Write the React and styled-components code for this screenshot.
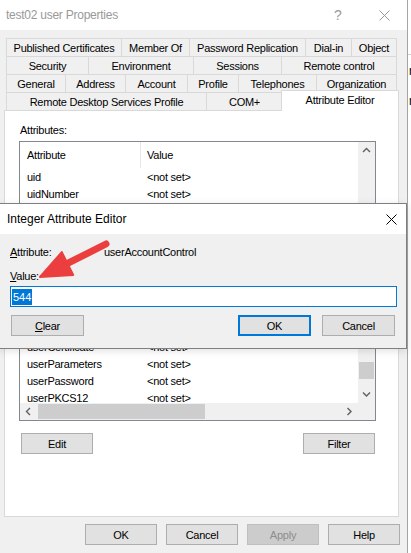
import React from "react";
import styled, { createGlobalStyle } from "styled-components";

const GlobalStyle = createGlobalStyle`
  html, body {
    margin: 0;
    padding: 0;
    background: #fff;
  }
  body {
    font-family: "Liberation Sans", Arial, sans-serif;
    font-size: 11px;
    color: #000;
  }
  * {
    box-sizing: border-box;
  }
`;

const Page = styled.div`
  position: relative;
  display: flex;
  width: 411px;
  height: 553px;
  overflow: hidden;
`;

const Window = styled.div`
  width: 408px;
  flex-shrink: 0;
  display: flex;
  flex-direction: column;
  background: #f0f0f0;
  border-right: 1px solid #a5a5a5;
`;

const TitleBar = styled.div`
  height: 30px;
  display: flex;
  align-items: center;
  background: #fff;
  padding-left: ${({ $pad }) => $pad}px;
`;

const TitleText = styled.span`
  flex: 1;
  font-size: 12px;
  letter-spacing: ${({ $tight }) => ($tight ? "-0.25px" : "0")};
  color: ${({ $muted }) => ($muted ? "#999" : "#000")};
  white-space: nowrap;
`;

const CaptionButton = styled.div`
  width: ${({ $w }) => $w}px;
  height: 30px;
  display: flex;
  align-items: center;
  justify-content: center;
  color: ${({ $color }) => $color};
  font-size: 14px;
`;

const Body = styled.div`
  display: flex;
  flex-direction: column;
  padding: 8px 0 0 4px;
`;

const TabStrip = styled.div`
  display: flex;
  flex-direction: column;
  padding-left: 2px;
`;

const TabRow = styled.div`
  display: flex;
  align-items: flex-start;
  height: 18px;
`;

const Tab = styled.div`
  width: ${({ $w }) => $w}px;
  height: 18px;
  flex-shrink: 0;
  display: flex;
  align-items: center;
  justify-content: center;
  background: #f0f0f0;
  border-top: 1px solid #d9d9d9;
  border-right: 1px solid #d9d9d9;
  white-space: nowrap;
  letter-spacing: -0.25px;

  &:first-child {
    border-left: 1px solid #d9d9d9;
  }
`;

const ActiveTab = styled(Tab)`
  position: relative;
  z-index: 1;
  height: 21px;
  margin-top: -2px;
  margin-left: -2px;
  padding-bottom: 3px;
  background: #fff;
  border-left: 1px solid #d9d9d9;
`;

const Panel = styled.div`
  width: 395px;
  height: 407px;
  display: flex;
  flex-direction: column;
  padding: 12px 0 0 14px;
  background: #fff;
  border: 1px solid #d9d9d9;
`;

const PanelLabel = styled.div`
  line-height: 14px;
  padding-left: 1px;
  letter-spacing: -0.25px;
`;

const ListBox = styled.div`
  margin-top: 4px;
  width: 357px;
  height: 280px;
  display: grid;
  grid-template-columns: 338px 17px;
  grid-template-rows: 261px 17px;
  border: 1px solid #828790;
  background: #fff;
`;

const ListContent = styled.div`
  overflow: hidden;
`;

const ListHeader = styled.div`
  display: grid;
  grid-template-columns: 121px 1fr;
  height: 26px;
`;

const HeaderCell = styled.div`
  display: flex;
  align-items: center;
  padding-left: ${({ $pad }) => $pad}px;
  border-right: ${({ $divider }) => ($divider ? "1px solid #e5e5e5" : "none")};
  letter-spacing: -0.25px;
`;

const ListRow = styled.div`
  display: grid;
  grid-template-columns: 121px 1fr;
  height: 17px;
  align-items: center;
  white-space: nowrap;
  letter-spacing: -0.25px;
`;

const Cell = styled.span`
  padding-left: ${({ $pad }) => $pad}px;
  overflow: hidden;
`;

const VScroll = styled.div`
  display: flex;
  flex-direction: column;
  background: #f0f0f0;
`;

const HScroll = styled.div`
  display: flex;
  background: #f0f0f0;
`;

const ScrollArrow = styled.div`
  width: 17px;
  height: 17px;
  flex-shrink: 0;
  display: flex;
  align-items: center;
  justify-content: center;
`;

const Track = styled.div`
  flex: 1;
  display: flex;
  flex-direction: ${({ $vertical }) => ($vertical ? "column" : "row")};
`;

const Thumb = styled.div`
  background: #cdcdcd;
  width: ${({ $vertical }) => ($vertical ? "15px" : "auto")};
  height: ${({ $vertical }) => ($vertical ? "auto" : "15px")};
  margin: ${({ $vertical }) => ($vertical ? "0 1px" : "1px 0")};
`;

const Corner = styled.div`
  background: #f0f0f0;
`;

const PanelButtons = styled.div`
  margin-top: 12px;
  margin-left: 2px;
  width: 354px;
  display: flex;
  justify-content: space-between;
`;

const Button = styled.div`
  width: ${({ $w }) => $w || 72}px;
  height: 21px;
  flex-shrink: 0;
  display: flex;
  align-items: center;
  justify-content: center;
  background: ${({ $disabled }) => ($disabled ? "#cccccc" : "#e1e1e1")};
  border: ${({ $default, $disabled }) =>
    $default
      ? "2px solid #0078d7"
      : $disabled
      ? "1px solid #bfbfbf"
      : "1px solid #adadad"};
  color: ${({ $disabled }) => ($disabled ? "#8d8d8d" : "#000")};
  letter-spacing: -0.25px;
  margin-left: ${({ $ml }) => $ml || 0}px;
`;

const Footer = styled.div`
  margin-top: 7px;
  padding-right: 7px;
  display: flex;
  justify-content: flex-end;
  gap: 9px;
`;

const Backdrop = styled.div`
  flex: 1;
  display: flex;
  flex-direction: column;
  padding-top: 54px;
  background: #fff;
  overflow: hidden;
`;

const BackdropRule = styled.div`
  border-top: 1px solid #d0d0d0;
`;

const BackdropText = styled.div`
  margin-top: ${({ $mt }) => $mt}px;
  padding-left: 1px;
  font-size: 12px;
  line-height: 14px;
  white-space: nowrap;
`;

const Dialog = styled.div`
  position: absolute;
  left: -1px;
  top: 203px;
  z-index: 2;
  width: 408px;
  height: 146px;
  display: flex;
  flex-direction: column;
  background: #f0f0f0;
  border: 1px solid #7f7f7f;
  box-shadow: 0 2px 8px rgba(0, 0, 0, 0.12);
`;

const DialogBody = styled.div`
  display: flex;
  flex-direction: column;
  padding: 11px 0 0 10px;
`;

const FieldRow = styled.div`
  display: flex;
  line-height: 14px;
  margin-top: ${({ $mt }) => $mt || 0}px;
  letter-spacing: -0.25px;
  white-space: nowrap;
`;

const FieldName = styled.span`
  width: 94px;
  flex-shrink: 0;
`;

const ValueInput = styled.div`
  margin-top: 3px;
  width: 387px;
  height: 21px;
  display: flex;
  align-items: center;
  padding-left: 1px;
  background: #fff;
  border: 1px solid #0078d7;
`;

const Selection = styled.span`
  background: #0078d7;
  color: #fff;
  line-height: 16px;
  padding: 0 1px;
`;

const DialogButtons = styled.div`
  margin-top: 8px;
  width: 387px;
  padding-right: 2px;
  display: flex;
`;

const Spacer = styled.div`
  flex: 1;
`;

const Annotation = styled.svg`
  position: absolute;
  left: 34px;
  top: 236px;
  z-index: 3;
  pointer-events: none;
`;

const tabRows = [
  [
    ["Published Certificates", 116],
    ["Member Of", 68],
    ["Password Replication", 116],
    ["Dial-in", 46],
    ["Object", 45],
  ],
  [
    ["Security", 83],
    ["Environment", 105],
    ["Sessions", 88],
    ["Remote control", 115],
  ],
  [
    ["General", 60],
    ["Address", 60],
    ["Account", 62],
    ["Profile", 51],
    ["Telephones", 78],
    ["Organization", 80],
  ],
  [
    ["Remote Desktop Services Profile", 201],
    ["COM+", 76],
  ],
];

const attributes = [
  ["uid", "<not set>"],
  ["uidNumber", "<not set>"],
  ["unicodePwd", "<not set>"],
  ["unixHomeDirectory", "<not set>"],
  ["unixUserPassword", "<not set>"],
  ["unstructuredAddress", "<not set>"],
  ["unstructuredName", "<not set>"],
  ["url", "<not set>"],
  ["userAccountControl", "0x220 = ( PASSWD_NOTREQD | NORMAL_ACCOUNT )"],
  ["userCert", "<not set>"],
  ["userCertificate", "<not set>"],
  ["userParameters", "<not set>"],
  ["userPassword", "<not set>"],
  ["userPKCS12", "<not set>"],
  ["userPrincipalName", "test02@corp.local"],
];

const CloseGlyph = ({ color }) => (
  <svg width="11" height="11" viewBox="0 0 11 11">
    <path d="M0.5 0.5 L10.5 10.5 M10.5 0.5 L0.5 10.5" stroke={color} strokeWidth="1" fill="none" />
  </svg>
);

const Chevron = ({ dir }) => {
  const paths = {
    up: "M1 5 L4.5 1.5 L8 5",
    down: "M1 1.5 L4.5 5 L8 1.5",
    left: "M5 1 L1.5 4.5 L5 8",
    right: "M1.5 1 L5 4.5 L1.5 8",
  };
  const vertical = dir === "up" || dir === "down";
  return (
    <svg width={vertical ? 9 : 7} height={vertical ? 7 : 9} viewBox={vertical ? "0 0 9 7" : "0 0 7 9"}>
      <path d={paths[dir]} stroke="#606060" strokeWidth="1.4" fill="none" />
    </svg>
  );
};

export default function App() {
  return (
    <>
      <GlobalStyle />
      <Page>
        <Window>
          <TitleBar $pad={6}>
            <TitleText $muted $tight>
              test02 user Properties
            </TitleText>
            <CaptionButton $w={46} $color="#999">
              ?
            </CaptionButton>
            <CaptionButton $w={46}>
              <CloseGlyph color="#999" />
            </CaptionButton>
          </TitleBar>

          <Body>
            <TabStrip>
              {tabRows.map((row, i) => (
                <TabRow key={i}>
                  {row.map(([label, w]) => (
                    <Tab key={label} $w={w}>
                      {label}
                    </Tab>
                  ))}
                  {i === tabRows.length - 1 && <ActiveTab $w={118}>Attribute Editor</ActiveTab>}
                </TabRow>
              ))}
            </TabStrip>

            <Panel>
              <PanelLabel>Attributes:</PanelLabel>
              <ListBox>
                <ListContent>
                  <ListHeader>
                    <HeaderCell $pad={7} $divider>
                      Attribute
                    </HeaderCell>
                    <HeaderCell $pad={6}>Value</HeaderCell>
                  </ListHeader>
                  {attributes.map(([name, value]) => (
                    <ListRow key={name}>
                      <Cell $pad={7}>{name}</Cell>
                      <Cell $pad={6}>{value}</Cell>
                    </ListRow>
                  ))}
                </ListContent>
                <VScroll>
                  <ScrollArrow>
                    <Chevron dir="up" />
                  </ScrollArrow>
                  <Track $vertical>
                    <Thumb $vertical style={{ marginTop: 203, height: 17 }} />
                  </Track>
                  <ScrollArrow>
                    <Chevron dir="down" />
                  </ScrollArrow>
                </VScroll>
                <HScroll>
                  <ScrollArrow>
                    <Chevron dir="left" />
                  </ScrollArrow>
                  <Track>
                    <Thumb style={{ marginLeft: 1, width: 167 }} />
                  </Track>
                  <ScrollArrow>
                    <Chevron dir="right" />
                  </ScrollArrow>
                </HScroll>
                <Corner />
              </ListBox>
              <PanelButtons>
                <Button>Edit</Button>
                <Button>Filter</Button>
              </PanelButtons>
            </Panel>

            <Footer>
              <Button>OK</Button>
              <Button>Cancel</Button>
              <Button $disabled>Apply</Button>
              <Button>Help</Button>
            </Footer>
          </Body>
        </Window>

        <Backdrop>
          <BackdropRule />
          <BackdropText $mt={9}>re</BackdropText>
          <BackdropText $mt={16}>re</BackdropText>
        </Backdrop>

        <Dialog>
          <TitleBar $pad={7}>
            <TitleText>Integer Attribute Editor</TitleText>
            <CaptionButton $w={30}>
              <CloseGlyph color="#000" />
            </CaptionButton>
          </TitleBar>
          <DialogBody>
            <FieldRow>
              <FieldName>
                <u>A</u>ttribute:
              </FieldName>
              <span>userAccountControl</span>
            </FieldRow>
            <FieldRow $mt={10}>
              <FieldName>
                <u>V</u>alue:
              </FieldName>
            </FieldRow>
            <ValueInput>
              <Selection>544</Selection>
            </ValueInput>
            <DialogButtons>
              <Button $w={73} $ml={1}>
                <u>C</u>lear
              </Button>
              <Spacer />
              <Button $w={73} $default>
                OK
              </Button>
              <Button $w={73} $ml={11}>
                Cancel
              </Button>
            </DialogButtons>
          </DialogBody>
        </Dialog>

        <Annotation width="80" height="46" viewBox="0 0 80 46">
          <line x1="33" y1="27.7" x2="72" y2="8" stroke="#eb3f3f" strokeWidth="7" strokeLinecap="round" />
          <polygon
            points="6,41 27.8,16.1 39.2,38.9"
            fill="#eb3f3f"
            stroke="#eb3f3f"
            strokeWidth="2"
            strokeLinejoin="round"
          />
        </Annotation>
      </Page>
    </>
  );
}
